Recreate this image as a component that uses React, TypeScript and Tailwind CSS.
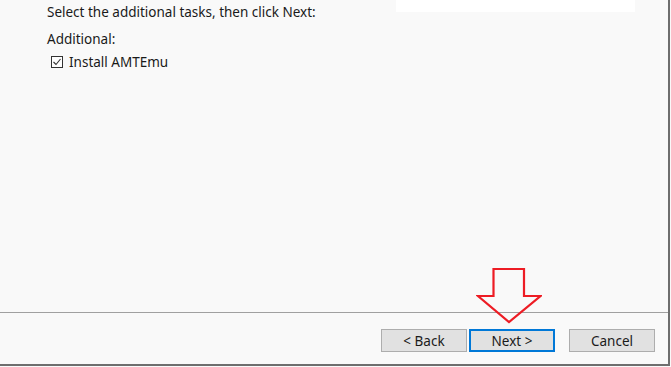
export default function App() {
  const font = { fontFamily: '"Noto Sans", "Open Sans", sans-serif' };
  return (
    <div className="h-[367px] w-[671px] overflow-hidden bg-[#f9f9f9]" style={font}>
      <div className="flex h-[366px] w-[670px] flex-col border-r-2 border-b-2 border-[#6e6e6e] text-[13.5px] text-[#1a1a1a]">
        <div className="flex">
          <div className="ml-[396px] h-[12px] w-[239px] bg-white" />
        </div>
        <div className="flex flex-1 flex-col pl-[47px]">
          <p className="-mt-[10px] leading-[20px]">Select the additional tasks, then click Next:</p>
          <p className="mt-[7px] leading-[20px]">Additional:</p>
          <label className="mt-[3px] flex items-center gap-[6px] pl-[4px] leading-[20px]">
            <svg width="12" height="12" viewBox="0 0 12 12" className="shrink-0">
              <rect x="0.5" y="0.5" width="11" height="11" fill="white" stroke="#333" />
              <path d="M2.5 6 L5 8.5 L9.5 3" fill="none" stroke="#333" strokeWidth="1.1" />
            </svg>
            <span>Install AMTEmu</span>
          </label>
        </div>
        <div className="relative h-[1px] bg-[#a0a0a0]">
          <svg
            width="66"
            height="58"
            viewBox="0 0 66 58"
            className="absolute left-[476px] top-[-44px]"
          >
            <path
              d="M17.5 1 H48 V28 H64.5 L33 54 L2 28 H17.5 Z"
              fill="none"
              stroke="#ed1c24"
              strokeWidth="2.2"
              strokeLinejoin="miter"
            />
          </svg>
        </div>
        <div className="flex h-[51px] items-start pt-[16px] pl-[381px]">
          <button className="h-[23px] w-[86px] border border-[#adadad] bg-[#e1e1e1] text-[13.5px] leading-[20px] text-[#1a1a1a]">
            &lt; Back
          </button>
          <button className="ml-[2px] h-[23px] w-[86px] border-2 border-[#0078d7] bg-[#e1e1e1] text-[13.5px] leading-[18px] text-[#1a1a1a]">
            Next &gt;
          </button>
          <button className="ml-[14px] h-[23px] w-[86px] border border-[#adadad] bg-[#e1e1e1] text-[13.5px] leading-[20px] text-[#1a1a1a]">
            Cancel
          </button>
        </div>
      </div>
    </div>
  );
}
